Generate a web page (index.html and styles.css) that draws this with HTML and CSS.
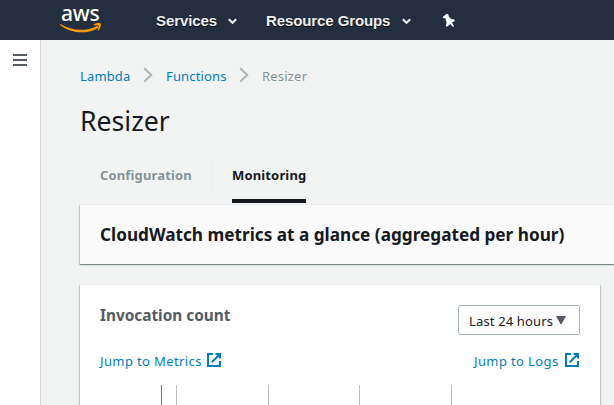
FILE: index.html
```html
<!DOCTYPE html>
<html lang="en">
<head>
<meta charset="utf-8">
<title>Resizer - Lambda</title>
<link rel="stylesheet" href="styles.css">
</head>
<body>
<header class="topbar">
  <div class="logo">
    <span class="logo-text">aws</span>
    <svg class="smile" viewBox="0 0 42 10" width="42" height="10"><path d="M.5 1C11 8 26 8.6 36.6 3.2c1.5-.7 2.6.8 1.3 1.7C28 11.4 11 11 .2 2c-.4-.5-.1-1.2.3-1Z"/><path d="M33.8 1.3c2-1.5 6.2-1.7 6.9-.8.7 1-.2 5.2-2.4 7-.5.4-.9.1-.6-.4.6-1.4 1.4-3.7.9-4.4-.5-.7-3-.6-4.4-.4-.6.1-.9-.6-.4-1Z"/></svg>
  </div>
  <nav class="menu">
    <span class="menu-item services"><span class="menu-label">Services</span><svg class="chev" viewBox="0 0 9 7" width="9" height="7"><path d="M.8 1.2 4.5 4.8 8.2 1.2"/></svg></span>
    <span class="menu-item groups"><span class="menu-label">Resource Groups</span><svg class="chev" viewBox="0 0 9 7" width="9" height="7"><path d="M.8 1.2 4.5 4.8 8.2 1.2"/></svg></span>
    <svg class="pin" viewBox="0 0 14 16" width="14" height="16"><path d="M.7 4 4.8.8 6.6 1.8 6.6 3.2 9.2 6 12.3 6.6 12.8 8 10 9.6 12 13.6 11 14 8.2 11 5.4 13.4 3.8 13.2 4.6 9.4 3.2 5 1.4 5.2Z"/></svg>
  </nav>
</header>
<div class="shell">
  <aside class="rail"><svg viewBox="0 0 14 12" width="14" height="12"><path d="M0 1h14M0 6h14M0 11h14"/></svg></aside>
  <main class="main">
    <nav class="crumbs">
      <a class="crumb lambda">Lambda</a>
      <svg class="sep" viewBox="0 0 10 16" width="10" height="16"><path d="M1.2 1.2 8.3 8 1.2 14.8"/></svg>
      <a class="crumb functions">Functions</a>
      <svg class="sep" viewBox="0 0 10 16" width="10" height="16"><path d="M1.2 1.2 8.3 8 1.2 14.8"/></svg>
      <span class="crumb current">Resizer</span>
    </nav>
    <h1 class="title"><span class="fit">Resizer</span></h1>
    <div class="tabs">
      <div class="tab config">Configuration</div>
      <div class="tab monitoring">Monitoring</div>
    </div>
    <section class="banner"><h2><span class="fit">CloudWatch metrics at a glance (aggregated per hour)</span></h2></section>
    <section class="card">
      <div class="row head">
        <h3><span class="fit">Invocation count</span></h3>
        <div class="select"><span class="select-label">Last 24 hours</span><svg viewBox="0 0 10 8" width="10" height="8"><path d="M0 0h10L5.6 8H4.4Z"/></svg></div>
      </div>
      <div class="row links">
        <a class="link metrics"><span>Jump to Metrics</span><svg viewBox="0 0 14 14" width="14" height="14"><path d="M6 1H1v12h12V8M8.5 1H13v4.5M13 1 4.8 9.2"/></svg></a>
        <a class="link logs"><span>Jump to Logs</span><svg viewBox="0 0 14 14" width="14" height="14"><path d="M6 1H1v12h12V8M8.5 1H13v4.5M13 1 4.8 9.2"/></svg></a>
      </div>
      <svg class="chart" viewBox="0 0 480 20" width="480" height="20"><path class="axis" d="M61.5 0v20"/><path class="grid" d="M76.5 0v20M168.5 0v20M259.5 0v20M351.5 0v20"/></svg>
    </section>
  </main>
</div>
</body>
</html>
```
FILE: styles.css
```css
* { box-sizing: border-box; }
body {
  margin: 0;
  height: 405px;
  overflow: hidden;
  background: #f2f3f3;
  font: 13px/20px "Noto Sans", sans-serif;
  color: #16191f;
}
h1, h2, h3 { margin: 0; }
svg { display: block; flex: none; }
.fit { display: inline-block; transform-origin: 0 50%; white-space: nowrap; }

.topbar { display: flex; height: 40px; background: #232f3e; padding-left: 60px; }
.logo { width: 96px; padding-top: 4px; }
.logo-text {
  display: block;
  height: 19px;
  padding-left: 1px;
  color: #fff;
  font: 500 21px/18px "Noto Sans", sans-serif;
  letter-spacing: -.2px;
}
.smile { fill: #f90; }
.menu { display: flex; align-items: center; height: 41px; }
.menu-item {
  display: flex;
  align-items: center;
  color: #eee;
  font: bold 15px/20px "Liberation Sans", sans-serif;
  letter-spacing: -.1px;
  text-shadow: 0 1px 0 #000;
  white-space: nowrap;
}
.services { width: 110px; }
.groups { width: 176px; }
.services .menu-label { width: 72px; }
.groups .menu-label { width: 136px; }
.chev { margin-top: 2px; fill: none; stroke: #eee; stroke-width: 2; }
.pin { fill: #fff; }

.shell { display: flex; height: 365px; }
.rail { flex: none; width: 41px; background: #fff; border-right: 1px solid #d5dbdb; padding: 14px 0 0 13px; }
.rail svg { stroke: #545b64; stroke-width: 2; }
.main { flex: 1; min-width: 0; padding: 26px 0 0 39px; }

.crumbs { display: flex; height: 20px; white-space: nowrap; }
.crumb { color: #007dbc; letter-spacing: .2px; }
.lambda { width: 63px; letter-spacing: .15px; }
.functions { width: 73px; letter-spacing: .15px; }
.sep + .crumb { margin-left: 13px; }
.sep { margin-top: 1px; fill: none; stroke: #aab7b8; stroke-width: 2; }
.crumb.current { color: #879596; }

.title { margin-top: 16px; height: 36px; font-size: 28px; line-height: 36px; font-weight: 400; }
.title .fit { transform: scaleX(.95); }

.tabs { display: flex; margin-top: 22px; padding-left: 20px; height: 43px; }
.tab { height: 43px; padding-top: 5px; font-weight: 700; letter-spacing: .15px; }
.config {
  width: 113px;
  height: 29px;
  margin-right: 19px;
  color: #879596;
  border-right: 1px solid #eaeded;
}
.monitoring { width: 74px; border-bottom: 4px solid #16191f; }

.banner, .card { box-shadow: 0 1px 1px rgba(0,28,36,.3), 1px 1px 1px rgba(0,28,36,.15), -1px 1px 1px rgba(0,28,36,.15); }
.banner {
  height: 60px;
  margin-top: 1px;
  padding: 18px 20px;
  background: #fafafa;
  border-top: 1px solid #eaeded;
}
.banner h2 { font-size: 18px; line-height: 22px; }
.banner .fit { transform: scaleX(.955); }
.card {
  width: 520px;
  height: 121px;
  margin-top: 20px;
  padding: 20px 20px 0;
  background: #fff;
  border-top: 1px solid #eaeded;
}
.row { display: flex; justify-content: space-between; }
.head { height: 30px; }
h3 { color: #545b64; font-size: 16px; line-height: 20px; }
h3 .fit { transform: scaleX(.96); }
.select {
  display: flex;
  align-items: center;
  width: 122px;
  height: 30px;
  padding-left: 10px;
  border: 1px solid #aab7b8;
  border-radius: 2px;
  white-space: nowrap;
}
.select-label { width: 87px; padding-top: 1px; letter-spacing: .15px; }
.select svg { fill: #545b64; }
.links { margin-top: 16px; height: 20px; }
.link { display: flex; color: #007dbc; letter-spacing: .38px; white-space: nowrap; }
.metrics span { width: 107px; }
.logs span { width: 91px; }
.link.logs { margin-right: 1px; }
.link svg { margin-top: 2px; fill: none; stroke: #007dbc; stroke-width: 2; }
.chart { margin-top: 14px; fill: none; }
.axis { stroke: #777; }
.grid { stroke: #bbb; }
```
